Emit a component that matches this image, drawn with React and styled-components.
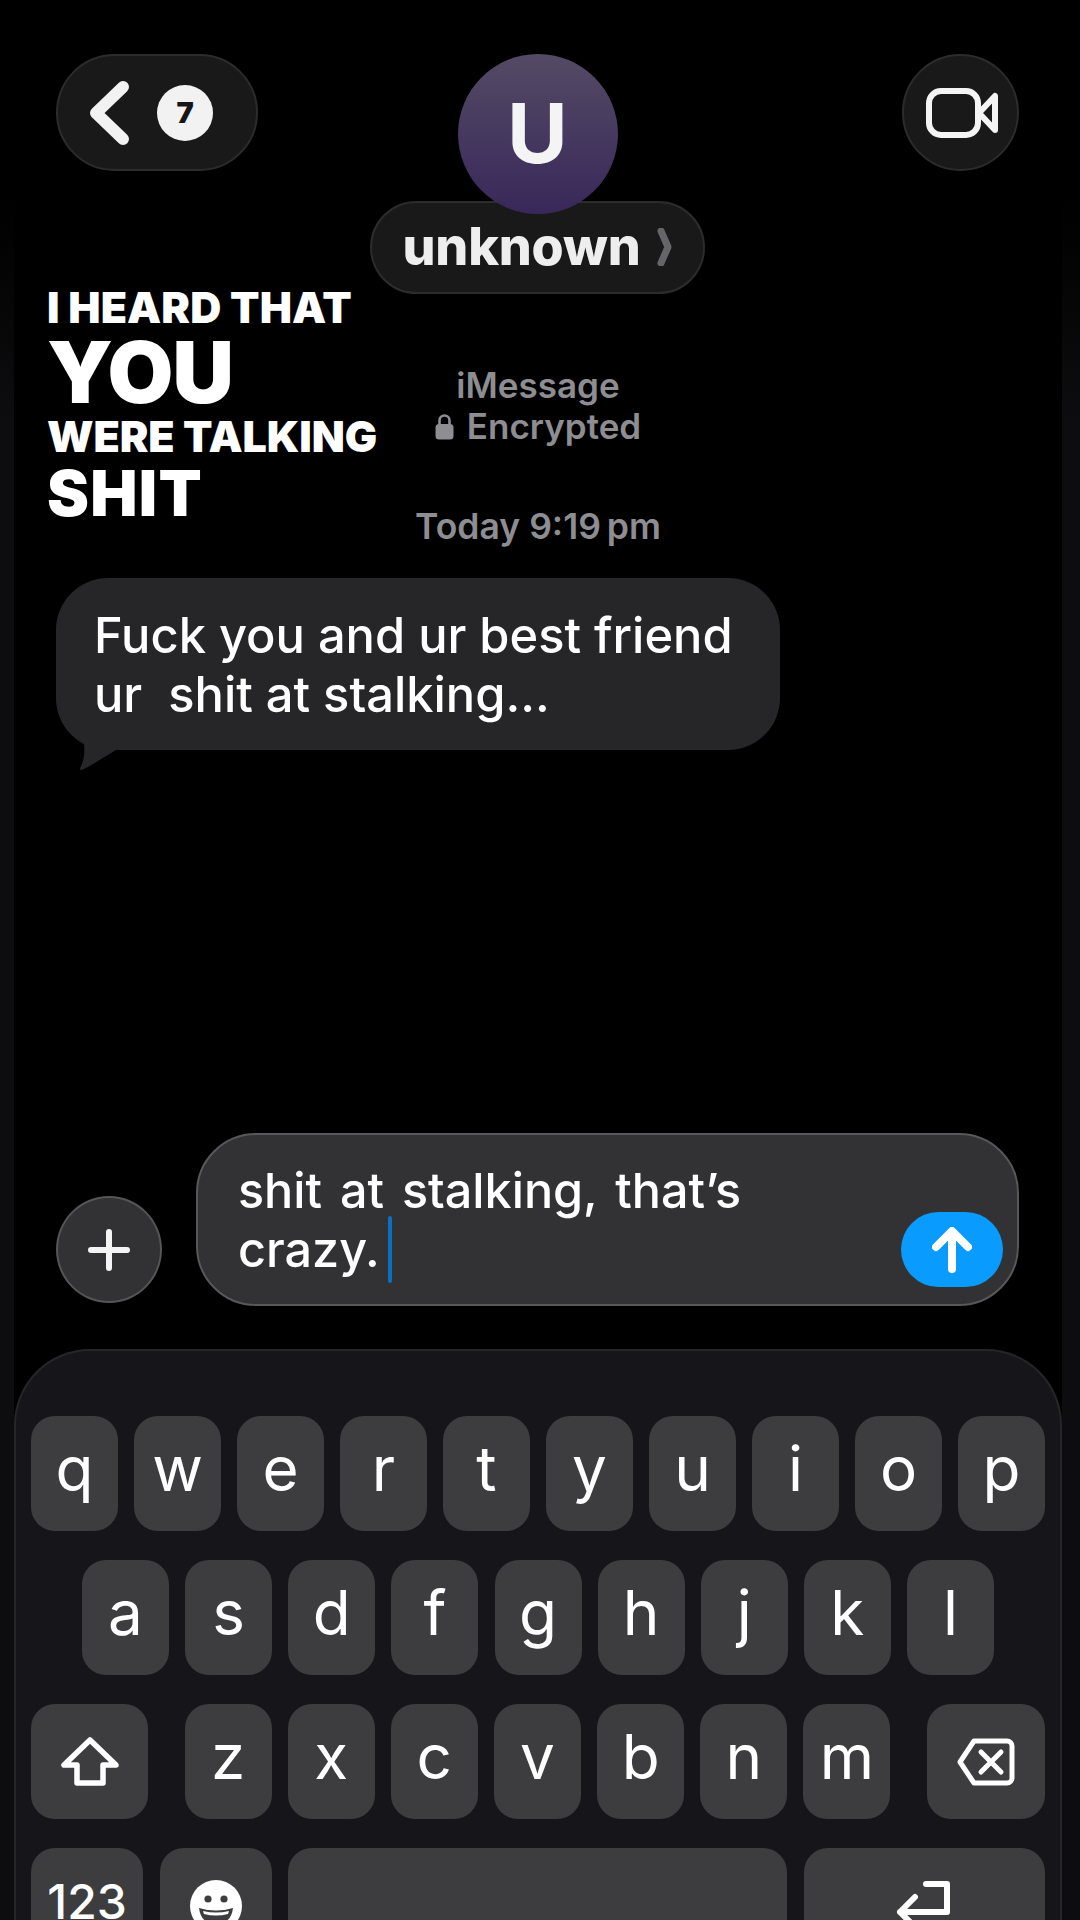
import React from "react";
import styled, { createGlobalStyle } from "styled-components";

const Global = createGlobalStyle`
  html, body { margin: 0; padding: 0; background: #000; }
  * { box-sizing: border-box; }
`;

const Page = styled.div`
  width: 1080px;
  height: 1920px;
  overflow: hidden;
  padding: 0 18px 0 14px;
  background: linear-gradient(#000 200px, #0d0d0f 420px);
  font-family: Inter, "Liberation Sans", sans-serif;
  color: #fff;
`;
const Screen = styled.div`
  position: relative;
  height: 1920px;
  background: #000;
`;
const Header = styled.header`
  display: grid;
  grid-template-columns: 1fr auto 1fr;
  align-items: start;
  padding: 54px 43px 0 42px;
`;
const GlassPill = styled.div`
  display: flex;
  align-items: center;
  height: ${p => p.$h}px;
  border-radius: ${p => p.$h / 2}px;
  background: #191919;
  border: 2px solid #2c2c2c;
`;
const BackPill = styled(GlassPill)`
  justify-self: start;
  width: 202px;
  gap: 26px;
  padding-left: 31px;
`;
const Badge = styled.span`
  width: 56px;
  height: 56px;
  border-radius: 50%;
  background: #f2f2f2;
  color: #161616;
  display: flex;
  align-items: center;
  justify-content: center;
  font-size: 29px;
  font-weight: 900;
`;
const VideoButton = styled(GlassPill)`
  justify-self: end;
  width: 117px;
  justify-content: center;
  padding-left: 3px;
`;
const Contact = styled.div`
  display: flex;
  flex-direction: column;
  align-items: center;
`;
const Avatar = styled.div`
  position: relative;
  z-index: 1;
  width: 160px;
  height: 160px;
  margin-bottom: -13px;
  padding-bottom: 2px;
  border-radius: 50%;
  background: linear-gradient(#544a64, #38285a);
  display: flex;
  align-items: center;
  justify-content: center;
  font-size: 83px;
  font-weight: 700;
  color: #f4f4f4;
`;
const NamePill = styled(GlassPill)`
  width: 335px;
  justify-content: center;
  gap: 16px;
  padding-bottom: 2px;
  font-size: 52px;
  font-weight: 800;
  color: #eeeeee;
  letter-spacing: -0.2px;
`;
const Sticker = styled.div`
  position: absolute;
  left: 33px;
  top: 286px;
  display: flex;
  flex-direction: column;
  font-weight: 900;
`;
const StickerLine = styled.span`
  display: block;
  font-size: ${p => p.$size}px;
  line-height: 1;
  letter-spacing: ${p => p.$track}px;
  margin-top: ${p => p.$top}px;
`;
const Meta = styled.div`
  display: flex;
  flex-direction: column;
  align-items: center;
  font-size: ${p => p.$size || 35}px;
  line-height: 41px;
  font-weight: 600;
  color: #8d8d92;
  margin-top: ${p => p.$top}px;
`;
const MetaLine = styled.div`
  display: flex;
  align-items: center;
  gap: 13px;
`;
const Bubble = styled.div`
  position: relative;
  width: 724px;
  height: 172px;
  margin: 31px 0 0 42px;
  padding: 28px 0 0 38px;
  border-radius: 52px;
  background: #262629;
  font-size: 48.8px;
  font-weight: 450;
  line-height: 59px;
  white-space: pre;
`;
const BubbleText = styled.div`
  position: relative;
  z-index: 1;
`;
const BubbleTail = styled.svg`
  position: absolute;
  left: -6px;
  top: 112px;
`;
const Composer = styled.div`
  display: flex;
  align-items: flex-end;
  gap: 34px;
  margin-top: 383px;
  padding: 0 43px 0 42px;
`;
const PlusButton = styled.div`
  flex: none;
  width: 106px;
  height: 107px;
  margin-bottom: 3px;
  border-radius: 50%;
  background: #323234;
  border: 2px solid #555557;
  display: flex;
  align-items: center;
  justify-content: center;
`;
const Field = styled.div`
  position: relative;
  flex: 1;
  height: 173px;
  padding: 26px 0 0 40px;
  border-radius: 60px;
  background: #323234;
  border: 2px solid #58585a;
  font-size: 48.5px;
  font-weight: 450;
  line-height: 59px;
  word-spacing: 5px;
`;
const Caret = styled.span`
  display: inline-block;
  width: 4px;
  height: 67px;
  margin: -4px 0 -4px 8px;
  border-radius: 2px;
  vertical-align: -12px;
  background: #0b6fc2;
`;
const SendButton = styled.div`
  position: absolute;
  right: 14px;
  bottom: 17px;
  width: 102px;
  height: 75px;
  border-radius: 37.5px;
  background: #0a9bff;
  display: flex;
  align-items: center;
  justify-content: center;
`;
const Keyboard = styled.div`
  margin-top: 43px;
  height: 640px;
  padding: 65px 15px 0;
  border: 2px solid #262629;
  border-bottom: 0;
  border-radius: 76px 76px 0 0;
  background: #16161a;
  display: flex;
  flex-direction: column;
  gap: 29px;
`;
const KeyRow = styled.div`
  display: flex;
  justify-content: space-between;
  padding: 0 ${p => p.$inset || 0}px;
`;
const LetterGroup = styled.div`
  display: flex;
  justify-content: space-between;
  width: 706px;
`;
const Key = styled.div`
  flex: none;
  width: ${p => p.$w || 87}px;
  height: 115px;
  padding-bottom: ${p => p.$lift ?? 10}px;
  border-radius: 24px;
  background: #3d3d3f;
  display: flex;
  align-items: center;
  justify-content: center;
  font-size: ${p => p.$size || 62}px;
  font-weight: ${p => p.$weight || 400};
  line-height: 1;
`;

const rows = ["qwertyuiop", "asdfghjkl", "zxcvbnm"].map(r => r.split(""));

export default function App() {
  return (
    <Page>
      <Global />
      <Screen>
        <Header>
          <BackPill $h={117}>
            <svg width="42" height="64" viewBox="0 0 42 64" fill="none">
              <path d="M34 6 L7 32 L34 58" stroke="#f2f2f2" strokeWidth="12" strokeLinecap="round" strokeLinejoin="round" />
            </svg>
            <Badge>7</Badge>
          </BackPill>
          <Contact>
            <Avatar>U</Avatar>
            <NamePill $h={93}>
              <span>unknown</span>
              <svg width="16" height="38" viewBox="0 0 16 38" fill="none">
                <path d="M4 3 L11 19 L4 35" stroke="#666668" strokeWidth="7" strokeLinecap="round" strokeLinejoin="round" />
              </svg>
            </NamePill>
          </Contact>
          <VideoButton $h={117}>
            <svg width="72" height="50" viewBox="0 0 72 50" fill="none" stroke="#f4f4f4" strokeWidth="6" strokeLinejoin="round">
              <rect x="3" y="3" width="49" height="44" rx="12" />
              <path d="M53 25 L69 8 L69 42 Z" />
            </svg>
          </VideoButton>
        </Header>

        <Sticker>
          <StickerLine $size={43} $track={0.1} $top={0}>I HEARD THAT</StickerLine>
          <StickerLine $size={85} $track={-1} $top={1}>YOU</StickerLine>
          <StickerLine $size={43} $track={-0.1} $top={0}>WERE TALKING</StickerLine>
          <StickerLine $size={63} $track={1.3} $top={4}>SHIT</StickerLine>
        </Sticker>

        <Meta $top={71}>
          <div>iMessage</div>
          <MetaLine>
            <svg width="19" height="27" viewBox="0 0 19 27" fill="none">
              <path d="M4.5 13 V7.5 a5 5 0 0 1 10 0 V13" stroke="#8d8d92" strokeWidth="2.6" />
              <rect x="0.5" y="11" width="18" height="15.5" rx="3.5" fill="#8d8d92" />
            </svg>
            <span>Encrypted</span>
          </MetaLine>
        </Meta>
        <Meta $top={59} $size={35.5}>
          <div>Today 9:19{"\u202F"}pm</div>
        </Meta>

        <Bubble>
          <BubbleText>{"Fuck you and ur best friend\nur  shit at stalking..."}</BubbleText>
          <BubbleTail width="75" height="85" viewBox="50 690 75 85">
            <path d="M56 695 C58 715 66 733 84 744 C85 752 84 760 81 766 C79 770 80 771 84 769 C94 764 104 757 116 750 L116 695 Z" fill="#262629" />
          </BubbleTail>
        </Bubble>

        <Composer>
          <PlusButton>
            <svg width="42" height="42" viewBox="0 0 42 42" fill="none">
              <path d="M21 3 V39 M3 21 H39" stroke="#f4f4f4" strokeWidth="6" strokeLinecap="round" />
            </svg>
          </PlusButton>
          <Field>
            shit at stalking, that’s
            <br />
            crazy.
            <Caret />
            <SendButton>
              <svg width="40" height="46" viewBox="0 0 40 46" fill="none">
                <path d="M20 42 V5 M4 20 L20 4 L36 20" stroke="#fff" strokeWidth="8" strokeLinecap="round" strokeLinejoin="round" />
              </svg>
            </SendButton>
          </Field>
        </Composer>

        <Keyboard>
          <KeyRow>
            {rows[0].map(k => <Key key={k}>{k}</Key>)}
          </KeyRow>
          <KeyRow $inset={51}>
            {rows[1].map(k => <Key key={k}>{k}</Key>)}
          </KeyRow>
          <KeyRow>
            <Key $w={117} $lift={0}>
              <svg width="60" height="50" viewBox="0 0 60 50" fill="none">
                <path d="M30 3 L4 28 H17 V46 H43 V28 H56 Z" stroke="#fff" strokeWidth="5.5" strokeLinejoin="round" />
              </svg>
            </Key>
            <LetterGroup>
              {rows[2].map(k => <Key key={k}>{k}</Key>)}
            </LetterGroup>
            <Key $w={118} $lift={0}>
              <svg width="58" height="48" viewBox="0 0 58 48" fill="none" stroke="#fff" strokeWidth="5" strokeLinecap="round" strokeLinejoin="round">
                <path d="M17 3 H50 a5 5 0 0 1 5 5 V40 a5 5 0 0 1 -5 5 H17 L3 24 Z" />
                <path d="M24 14 L44 34 M44 14 L24 34" />
              </svg>
            </Key>
          </KeyRow>
          <KeyRow>
            <Key $w={112} $size={48} $weight={500} $lift={8}>123</Key>
            <Key $w={112} $lift={0}>
              <svg width="52" height="52" viewBox="0 0 52 52">
                <circle cx="26" cy="26" r="26" fill="#fff" />
                <circle cx="18" cy="19" r="3.6" fill="#3d3d3f" />
                <circle cx="34" cy="19" r="3.6" fill="#3d3d3f" />
                <path d="M9 28 Q26 33 43 28 Q41 44 26 44 Q11 44 9 28 Z" fill="#3d3d3f" />
                <path d="M13 31 Q26 34 39 31 L38 34 Q26 37 14 34 Z" fill="#fff" />
              </svg>
            </Key>
            <Key $w={499} />
            <Key $w={241} $lift={0}>
              <svg width="56" height="50" viewBox="0 0 56 50" fill="none" stroke="#fff" strokeWidth="6" strokeLinecap="round" strokeLinejoin="round">
                <path d="M30 3 H51 V31 H4 M19 16 L4 31 L19 46" />
              </svg>
            </Key>
          </KeyRow>
        </Keyboard>
      </Screen>
    </Page>
  );
}
